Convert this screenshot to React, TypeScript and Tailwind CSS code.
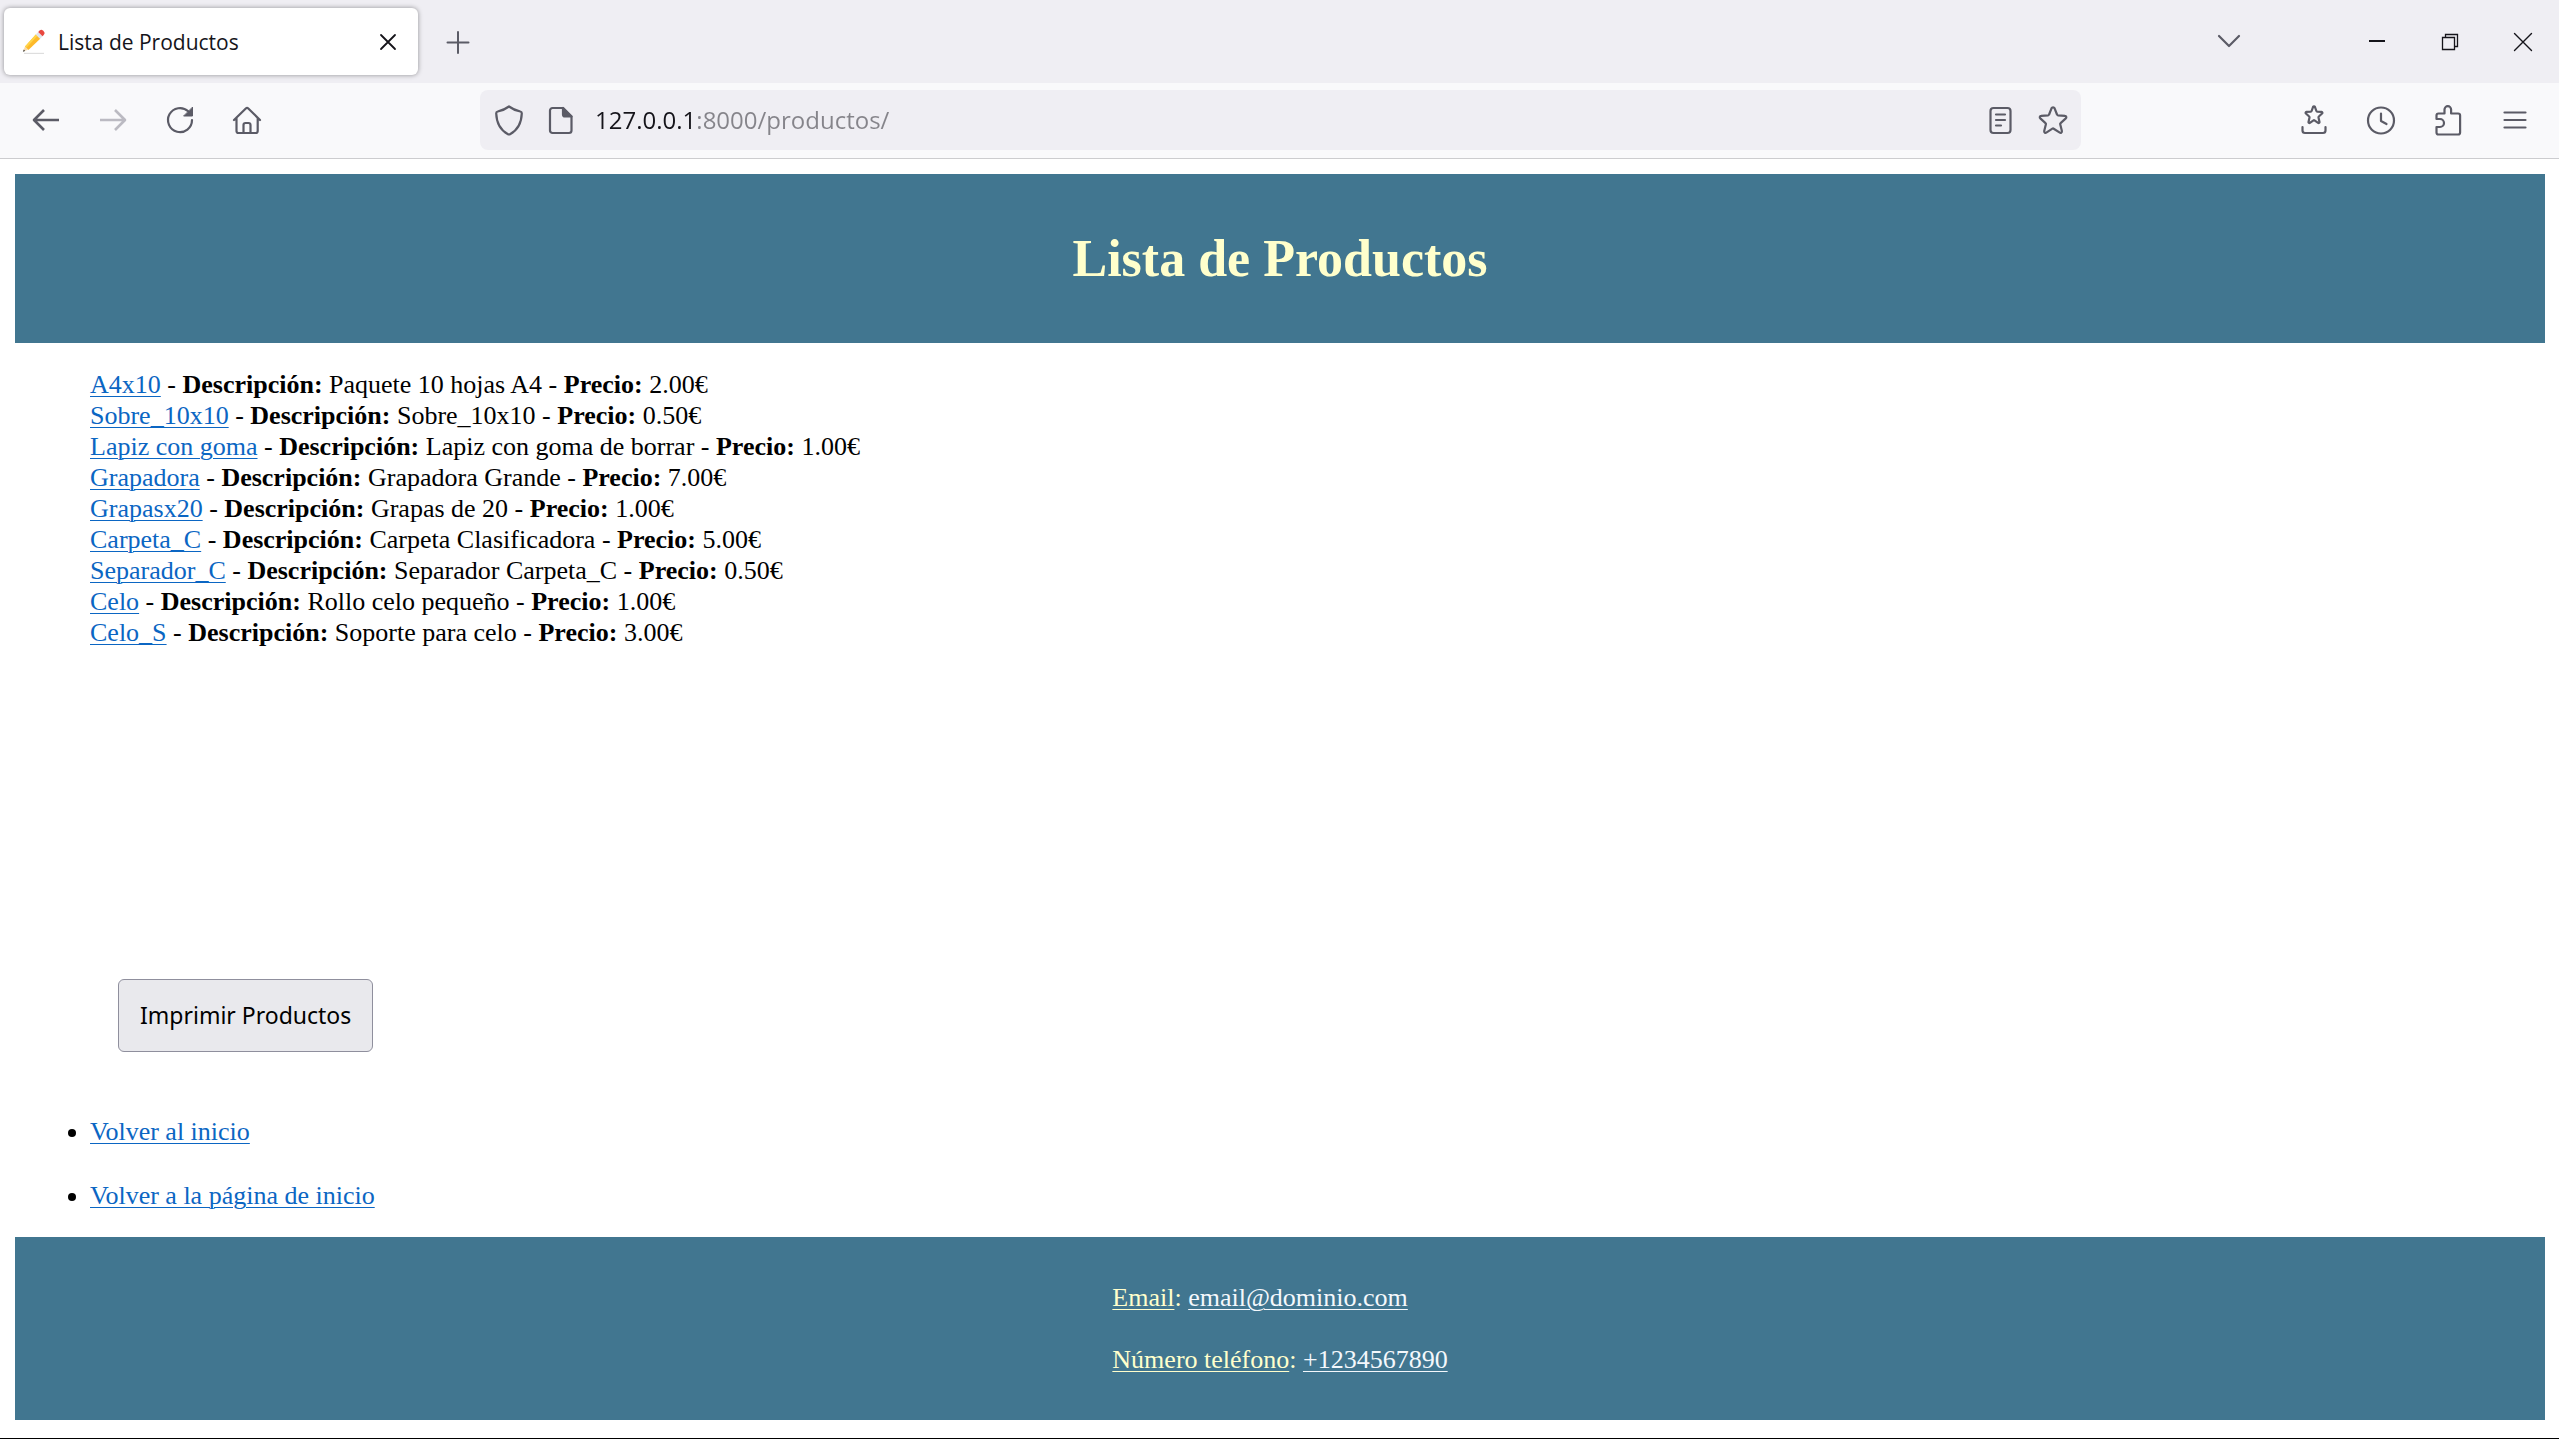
import type { ReactNode } from "react";

type Product = { name: string; description: string; price: string };

const products: Product[] = [
  { name: "A4x10", description: "Paquete 10 hojas A4", price: "2.00€" },
  { name: "Sobre_10x10", description: "Sobre_10x10", price: "0.50€" },
  { name: "Lapiz con goma", description: "Lapiz con goma de borrar", price: "1.00€" },
  { name: "Grapadora", description: "Grapadora Grande", price: "7.00€" },
  { name: "Grapasx20", description: "Grapas de 20", price: "1.00€" },
  { name: "Carpeta_C", description: "Carpeta Clasificadora", price: "5.00€" },
  { name: "Separador_C", description: "Separador Carpeta_C", price: "0.50€" },
  { name: "Celo", description: "Rollo celo pequeño", price: "1.00€" },
  { name: "Celo_S", description: "Soporte para celo", price: "3.00€" },
];

function Icon({ children, className = "" }: { children: ReactNode; className?: string }) {
  return (
    <svg
      viewBox="0 0 32 32"
      className={`size-8 shrink-0 ${className}`}
      fill="none"
      stroke="currentColor"
      strokeWidth="2.2"
      strokeLinecap="round"
      strokeLinejoin="round"
      aria-hidden="true"
    >
      {children}
    </svg>
  );
}

function ToolButton({ label, children, disabled }: { label: string; children: ReactNode; disabled?: boolean }) {
  return (
    <button
      type="button"
      aria-label={label}
      disabled={disabled}
      className="grid h-full w-[67px] shrink-0 place-items-center text-[#5b5b66] disabled:text-[#bbbac2]"
    >
      <Icon>{children}</Icon>
    </button>
  );
}

function WindowButton({ label, children }: { label: string; children: ReactNode }) {
  return (
    <button type="button" aria-label={label} className="grid h-full w-[73px] place-items-center text-[#15141a]">
      <Icon>{children}</Icon>
    </button>
  );
}

function Pencil() {
  return (
    <svg viewBox="0 0 24 26" className="h-[26px] w-6 shrink-0" aria-hidden="true">
      <path d="M2 24.4h20" stroke="#dedede" strokeWidth="1.2" />
      <path d="M3 17.5 1 22.6 6 20.8z" fill="#f7d9a8" />
      <path d="M1.8 20.6.9 22.8l2.3-.8z" fill="#3b3b3b" />
      <path d="M3 17.5 13.8 5.6l4.4 4.1L6.4 20.9z" fill="#fdb92a" />
      <path d="m3 17.5 10.8-11.9 1.5 1.4L4.4 18.8z" fill="#ffd447" />
      <path d="m13.8 5.6 2.4-2.5 4.3 4.1-2.3 2.5z" fill="#dfe3ea" />
      <path d="m16.2 3.1 1.5-1.5a2.3 2.3 0 0 1 3.2 0l1 1a2.3 2.3 0 0 1 0 3.2l-1.4 1.4z" fill="#e8473f" />
    </svg>
  );
}

function TabBar() {
  return (
    <div className="flex h-[83px] items-stretch bg-[#efeef3] pl-1">
      <div className="my-2 flex w-[414px] items-center rounded-md bg-white pl-[18px] pr-3 shadow-[0_0_5px_rgba(0,0,0,0.4)]">
        <Pencil />
        <span className="ml-3 flex-1 font-['Open_Sans',sans-serif] text-[21px] leading-7 text-[#15141a]">
          Lista de Productos
        </span>
        <button type="button" aria-label="Cerrar pestaña" className="grid size-9 place-items-center text-[#15141a]">
          <Icon>
            <path d="M9 9 23 23M23 9 9 23" strokeWidth="1.8" />
          </Icon>
        </button>
      </div>
      <button type="button" aria-label="Nueva pestaña" className="grid w-20 place-items-center text-[#5b5b66]">
        <Icon>
          <path d="M16 6v21M5.500 16.500h21" strokeWidth="2" />
        </Icon>
      </button>
      <div className="ml-auto flex">
        <button
          type="button"
          aria-label="Listar todas las pestañas"
          className="mr-[75px] grid w-[73px] place-items-center text-[#5b5b66]"
        >
          <Icon>
            <path d="m6 10 10 10 10-10" />
          </Icon>
        </button>
        <WindowButton label="Minimizar">
          <path d="M8 15h16" strokeWidth="2" strokeLinecap="butt" />
        </WindowButton>
        <WindowButton label="Restaurar">
          <path
            d="M8.500 11.500h12v12h-12zM11.500 11V8.500h12v12H21"
            strokeWidth="1.300"
            strokeLinejoin="miter"
          />
        </WindowButton>
        <WindowButton label="Cerrar">
          <path d="m7.500 7.500 17 17m0-17-17 17" strokeWidth="1.400" />
        </WindowButton>
      </div>
    </div>
  );
}

function NavBar() {
  return (
    <nav className="flex h-[76px] items-center border-b border-[#cccccf] bg-[#f9f9fb] pr-2.5 pb-0.5 pl-3">
      <ToolButton label="Atrás">
        <path d="M29 16H4M14 6 4 16l10 10" strokeWidth="2.600" strokeLinecap="butt" />
      </ToolButton>
      <ToolButton label="Adelante" disabled>
        <path d="M3 16h25M18 6l10 10-10 10" strokeWidth="2.600" strokeLinecap="butt" />
      </ToolButton>
      <ToolButton label="Recargar">
        <path d="M28 16a12 12 0 1 1-3.800-8.700" />
        <path d="M28.500 3.500v8.500h-8.500z" fill="currentColor" strokeWidth="1" />
      </ToolButton>
      <ToolButton label="Inicio">
        <path d="M3 16 14.800 4.500a1.800 1.800 0 0 1 2.500 0L29 16M5.500 14v13a2 2 0 0 0 2 2h17.200a2 2 0 0 0 2-2V14M12.500 29v-8a2 2 0 0 1 2-2h3a2 2 0 0 1 2 2v8" />
      </ToolButton>

      <div className="flex-1" />
      <div className="min-w-0 flex-[8]">
        <div className="flex h-[60px] items-center rounded-lg bg-[#efeef3] pr-3 pl-[13px] text-[#5b5b66]">
          <Icon>
            <path d="M16 2.500c3.500 2.600 7.500 4.200 11.300 5a1.800 1.800 0 0 1 1.500 1.800C28.500 18.500 25 26 17 30.200a2 2 0 0 1-2 0C7 26 3.500 18.500 3.200 9.300a1.800 1.800 0 0 1 1.500-1.800C8.500 6.700 12.500 5.100 16 2.500z" />
          </Icon>
          <Icon className="ml-5">
            <path d="M7.500 4H18l8.500 8.500v14a2.500 2.500 0 0 1-2.500 2.500H7.500A2.500 2.500 0 0 1 5 26.500v-20A2.500 2.500 0 0 1 7.500 4z" />
            <path d="M18 4v6.500a2 2 0 0 0 2 2h6.500z" fill="currentColor" />
          </Icon>
          <input
            type="text"
            aria-label="Dirección"
            defaultValue="127.0.0.1:8000/productos/"
            className="ml-[18px] h-full min-w-0 flex-1 bg-[linear-gradient(to_right,#15141a_102px,#85848a_102px)] bg-clip-text font-['Open_Sans',sans-serif] text-2xl text-transparent outline-none"
          />
          <Icon>
            <rect x="5.500" y="4" width="20" height="25" rx="3" />
            <path d="M11 10.500h9M11 16h9M11 21.500h5" />
          </Icon>
          <Icon className="ml-5">
            <path d="M17.600 4.300 20 10.500a1.200 1.200 0 0 0 1 .8l7 .6a1.400 1.400 0 0 1 .8 2.500l-5.200 4.700a1.200 1.200 0 0 0-.4 1.200l1.700 6.800a1.400 1.400 0 0 1-2.100 1.500l-6.100-3.900a1.200 1.200 0 0 0-1.300 0l-6.100 3.900a1.400 1.400 0 0 1-2.100-1.500l1.700-6.800a1.200 1.200 0 0 0-.4-1.200l-5.200-4.700a1.400 1.400 0 0 1 .8-2.500l7-.6a1.200 1.200 0 0 0 1-.8l2.400-6.200a1.700 1.700 0 0 1 3.100 0z" />
          </Icon>
        </div>
      </div>
      <div className="flex-1" />

      <ToolButton label="Guardar en marcadores">
        <path d="M16.900 2.800 18.400 7a.9.900 0 0 0 .8.600l4.400.3a.9.900 0 0 1 .5 1.600l-3.300 3a.9.900 0 0 0-.3.900l1 4.600a.9.900 0 0 1-1.400.9l-3.600-2.500a.9.900 0 0 0-1 0l-3.600 2.500a.9.900 0 0 1-1.400-.9l1-4.600a.9.900 0 0 0-.3-.9l-3.300-3a.9.900 0 0 1 .5-1.600l4.400-.3a.9.900 0 0 0 .8-.6l1.500-4.200a1 1 0 0 1 1.800 0z" />
        <path d="M4.500 23v3.500a2.500 2.500 0 0 0 2.500 2.500h18a2.500 2.500 0 0 0 2.500-2.500V23" />
      </ToolButton>
      <ToolButton label="Historial">
        <circle cx="16" cy="16.500" r="13" />
        <path d="M16 9.500V17l5.500 3" />
      </ToolButton>
      <ToolButton label="Extensiones">
        <path d="M6.500 30.500a2 2 0 0 1-2-2V23H8a4 4 0 0 0 0-8H4.500v-3.500a2 2 0 0 1 2-2h6V5.500a3.300 3.300 0 0 1 6.600 0v4h7a2 2 0 0 1 2 2v17a2 2 0 0 1-2 2z" />
      </ToolButton>
      <ToolButton label="Menú">
        <path d="M5.500 8.500h21M5.500 16h21M5.500 23.500h21" />
      </ToolButton>
    </nav>
  );
}

const linkStyle = "text-[#0b66c3] underline decoration-1 underline-offset-[3px]";

export default function App() {
  return (
    <div className="flex min-h-screen flex-col border-b border-black bg-white">
      <TabBar />
      <NavBar />
      <div className="flex flex-1 flex-col pt-[15px] pr-3.5 pb-[18px] pl-[15px] font-['Liberation_Serif',serif] text-[26px] leading-[31px] text-black">
        <header className="bg-[#417690] py-[52px] text-center text-[#ffffcc]">
          <h1 className="text-[52px] leading-[65px] font-bold">Lista de Productos</h1>
        </header>

        <main className="flex flex-1 flex-col justify-between py-[26px] pl-[75px]">
          <ul>
            {products.map((p) => (
              <li key={p.name}>
                <a href={`#${p.name}`} className={linkStyle}>
                  {p.name}
                </a>{" "}
                - <strong>Descripción:</strong> {p.description} - <strong>Precio:</strong> {p.price}
              </li>
            ))}
          </ul>

          <div>
            <button
              type="button"
              className="mb-16 ml-7 block rounded-md border border-[#8f8f9d] bg-[#e9e9ed] px-[21px] py-5 font-['Noto_Sans',sans-serif] text-[23px] leading-[31px]"
            >
              Imprimir Productos
            </button>
            <ul className="flex list-disc flex-col gap-[33px]">
              <li>
                <a href="#inicio" className={linkStyle}>
                  Volver al inicio
                </a>
              </li>
              <li>
                <a href="#pagina-de-inicio" className={linkStyle}>
                  Volver a la página de inicio
                </a>
              </li>
            </ul>
          </div>
        </main>

        <footer className="flex justify-center bg-[#417690] py-[45px] text-[#ffffcc]">
          <div className="flex flex-col gap-[31px]">
            <p>
              <span className="underline decoration-1 underline-offset-[3px]">Email</span>:{" "}
              <a href="mailto:email@dominio.com" className="text-[#f4f8fc] underline decoration-1 underline-offset-[3px]">
                email@dominio.com
              </a>
            </p>
            <p>
              <span className="underline decoration-1 underline-offset-[3px]">Número teléfono</span>:{" "}
              <a href="tel:+1234567890" className="text-[#f4f8fc] underline decoration-1 underline-offset-[3px]">
                +1234567890
              </a>
            </p>
          </div>
        </footer>
      </div>
    </div>
  );
}
